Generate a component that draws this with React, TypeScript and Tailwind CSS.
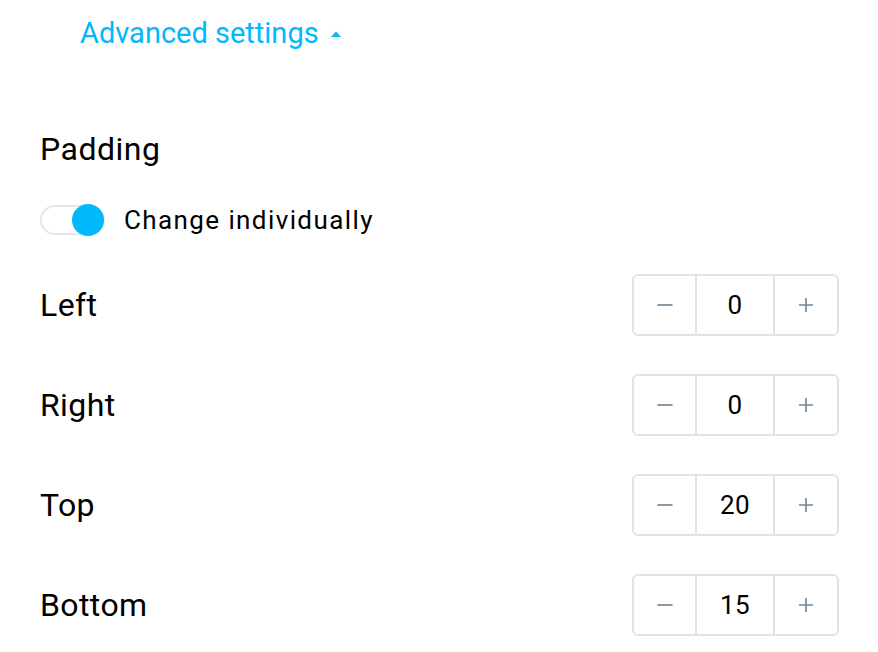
import { useState } from 'react';

function Stepper({ value }: { value: number }) {
  return (
    <div className="flex h-[62px] w-[207px] rounded-md border-2 border-[#e3e3e3] bg-white">
      <button className="flex w-[63px] items-center justify-center border-r-2 border-[#e3e3e3] text-[#748796]">
        <svg width="16" height="16" viewBox="0 0 16 16">
          <path d="M0.5 8h15" stroke="currentColor" strokeWidth="1.7" />
        </svg>
      </button>
      <div className="flex w-[78px] items-center justify-center border-r-2 border-[#e3e3e3] text-[26px] tracking-[0.3px] text-black">
        {value}
      </div>
      <button className="flex flex-1 items-center justify-center text-[#748796]">
        <svg width="16" height="16" viewBox="0 0 16 16">
          <path d="M1 8h14M8 1v14" stroke="currentColor" strokeWidth="1.7" />
        </svg>
      </button>
    </div>
  );
}

export default function App() {
  const [on, setOn] = useState(true);
  const rows = [
    { label: 'Left', value: 0 },
    { label: 'Right', value: 0 },
    { label: 'Top', value: 20 },
    { label: 'Bottom', value: 15 },
  ];

  return (
    <div className="min-h-screen bg-white pl-10 pr-[39px] font-['Roboto',sans-serif] text-black">
      <div className="flex h-[68px] items-center pl-10">
        <span className="text-[29px] text-[#00b8fc]">Advanced settings</span>
        <svg className="ml-[11px]" width="12" height="8" viewBox="0 0 12 8">
          <path d="M1 7L6 1.5L11 7Z" fill="#00b8fc" />
        </svg>
      </div>

      <div className="mt-[63px] flex h-9 items-center text-[32px] tracking-[0.5px]">Padding</div>

      <div className="mt-[35px] flex h-9 items-center gap-[19px]">
        <button
          onClick={() => setOn(!on)}
          className="relative h-[30px] w-[65px] rounded-full border-2 border-[#e6e6e6] bg-white"
        >
          <span className="absolute right-[-1px] top-1/2 h-8 w-8 -translate-y-1/2 rounded-full bg-[#00b8fc]" />
        </button>
        <span className="text-[26px] tracking-[1.4px]">Change individually</span>
      </div>

      <div className="mt-9 flex flex-col gap-[38px]">
        {rows.map((row) => (
          <div key={row.label} className="flex items-center justify-between">
            <span className="text-[32px] tracking-[0.4px]">{row.label}</span>
            <Stepper value={row.value} />
          </div>
        ))}
      </div>
    </div>
  );
}
